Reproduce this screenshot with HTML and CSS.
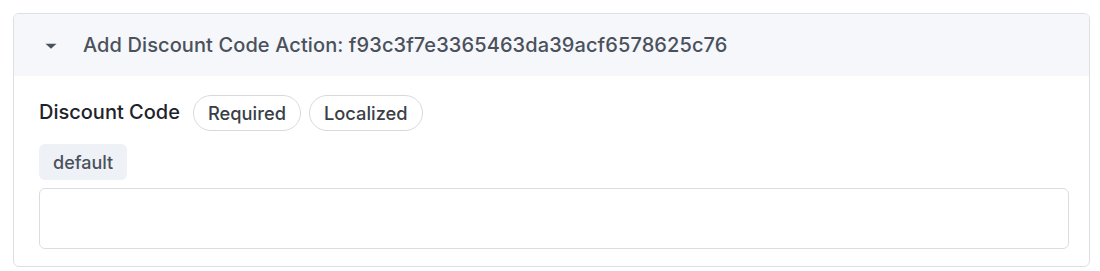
FILE: index.html
```html
<!DOCTYPE html>
<html>
<head>
<meta charset="utf-8">
<link rel="stylesheet" href="styles.css">
</head>
<body>
<div class="card">
  <div class="card-header">
    <svg class="caret" width="12" height="8" viewBox="0 0 12 8"><path d="M0.5 1.8 L6 6.8 L11.5 1.8 Z" fill="#4b515c"/></svg>
    <span class="title">Add Discount Code Action: f93c3f7e3365463da39acf6578625c76</span>
  </div>
  <div class="card-body">
    <div class="field-row">
      <span class="label">Discount Code</span>
      <span class="pill">Required</span>
      <span class="pill">Localized</span>
    </div>
    <div class="locale-row">
      <span class="locale">default</span>
    </div>
    <div class="input"></div>
  </div>
</div>
</body>
</html>
```
FILE: styles.css
```css
html, body {
  margin: 0;
  padding: 0;
  background: #ffffff;
  font-family: Inter, "Noto Sans", sans-serif;
}
body {
  padding: 13px 10px 0 13px;
}
.card {
  border: 1px solid #dcdfe4;
  border-radius: 6px;
  overflow: hidden;
  background: #fff;
  height: 254px;
  box-sizing: border-box;
}
.card-header {
  background: #f5f7fa;
  height: 62px;
  display: flex;
  align-items: center;
  padding-left: 31px;
}
.caret {
  margin-right: 26px;
  margin-top: 1px;
}
.title {
  font-size: 20px;
  font-weight: 500;
  letter-spacing: 0.1px;
  color: #4b515c;
}
.card-body {
  padding: 19px 20px 19px 25px;
}
.field-row {
  display: flex;
  align-items: center;
  gap: 8px;
  height: 36px;
}
.label {
  font-size: 20px;
  font-weight: 500;
  color: #1e2329;
  margin-right: 5px;
  margin-top: -2px;
}
.pill {
  border: 1px solid #d6d9de;
  border-radius: 18px;
  height: 36px;
  box-sizing: border-box;
  padding: 0 14px;
  display: flex;
  align-items: center;
  font-size: 18.3px;
  font-weight: 500;
  color: #3a3f47;
}
.locale-row {
  margin-top: 13px;
  display: flex;
}
.locale {
  background: #eef1f6;
  border-radius: 6px;
  height: 36px;
  padding: 0 14px;
  display: flex;
  align-items: center;
  font-size: 18px;
  font-weight: 500;
  color: #4b515c;
}
.input {
  margin-top: 8px;
  height: 61px;
  border: 1px solid #d9dce1;
  border-radius: 6px;
  box-sizing: border-box;
}
```
